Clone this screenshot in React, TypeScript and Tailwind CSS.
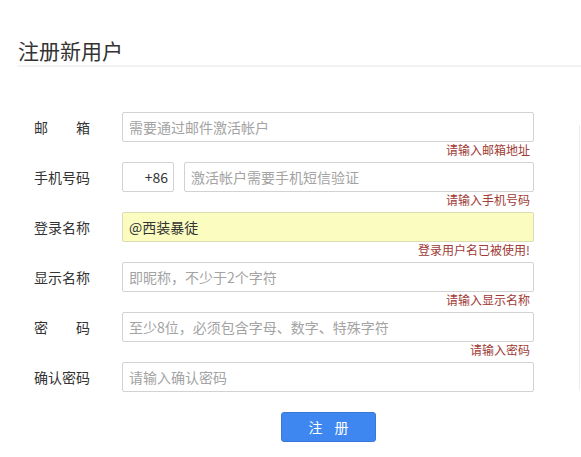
import { ReactNode } from 'react';

const font = { fontFamily: '"Noto Sans CJK SC", "Noto Sans", sans-serif' };

function Label({ chars }: { chars: string[] }) {
  return (
    <div className="flex w-[56px] shrink-0 justify-between text-[14px] text-[#333]">
      {chars.map((c, i) => (
        <span key={i}>{c}</span>
      ))}
    </div>
  );
}

function Field({
  label,
  error,
  children,
}: {
  label: string[];
  error?: string;
  children: ReactNode;
}) {
  return (
    <div className="flex flex-col">
      <div className="flex h-[30px] items-center">
        <Label chars={label} />
        <div className="ml-[32px] flex w-[412px] gap-[10px]">{children}</div>
      </div>
      <div className="flex h-[20px] w-[496px] justify-end text-[12px] leading-[15px] text-[#a03a34]">
        {error}
      </div>
    </div>
  );
}

function Input({ placeholder, value, yellow }: { placeholder?: string; value?: string; yellow?: boolean }) {
  return (
    <input
      readOnly
      placeholder={placeholder}
      value={value ?? ''}
      style={font}
      className={`h-[30px] min-w-0 flex-1 rounded-[2px] border px-[6px] text-[14px] text-[#333] outline-none placeholder:text-[#a3a3a3] ${
        yellow ? 'border-[#dddcb0] bg-[#fbfdc0]' : 'border-[#d2d2d2] bg-white'
      }`}
    />
  );
}

export default function App() {
  return (
    <div className="min-h-[457px] bg-white" style={font}>
      <div className="pt-[35px]">
        <div className="ml-[17px] border-b-2 border-[#f2f2f2]">
          <h1 className="pl-[1px] text-[21px] font-normal leading-[30px] text-[#333]">注册新用户</h1>
        </div>
      </div>

      <div className="flex">
        <form className="flex w-[579px] flex-col pl-[34px] pt-[45px]">
          <Field label={['邮', '箱']} error="请输入邮箱地址">
            <Input placeholder="需要通过邮件激活帐户" />
          </Field>
          <Field label={['手', '机', '号', '码']} error="请输入手机号码">
            <div className="flex h-[30px] w-[52px] shrink-0 items-center justify-end rounded-[2px] border border-[#d2d2d2] pr-[5px] text-[14px] text-[#333]">
              +86
            </div>
            <Input placeholder="激活帐户需要手机短信验证" />
          </Field>
          <Field label={['登', '录', '名', '称']} error="登录用户名已被使用!">
            <Input value="@西装暴徒" yellow />
          </Field>
          <Field label={['显', '示', '名', '称']} error="请输入显示名称">
            <Input placeholder="即昵称，不少于2个字符" />
          </Field>
          <Field label={['密', '码']} error="请输入密码">
            <Input placeholder="至少8位，必须包含字母、数字、特殊字符" />
          </Field>
          <Field label={['确', '认', '密', '码']}>
            <Input placeholder="请输入确认密码" />
          </Field>

          <div className="pl-[247px]">
            <button
              type="button"
              className="flex h-[30px] w-[95px] items-center justify-center gap-[12px] rounded-[3px] border border-[#3a78d8] bg-[#3f87f0] text-[14px] text-white"
            >
              <span>注</span>
              <span>册</span>
            </button>
          </div>
        </form>
        <div className="mt-[58px] h-[265px] w-[2px] border-l border-[#ececec]" />
      </div>
    </div>
  );
}
